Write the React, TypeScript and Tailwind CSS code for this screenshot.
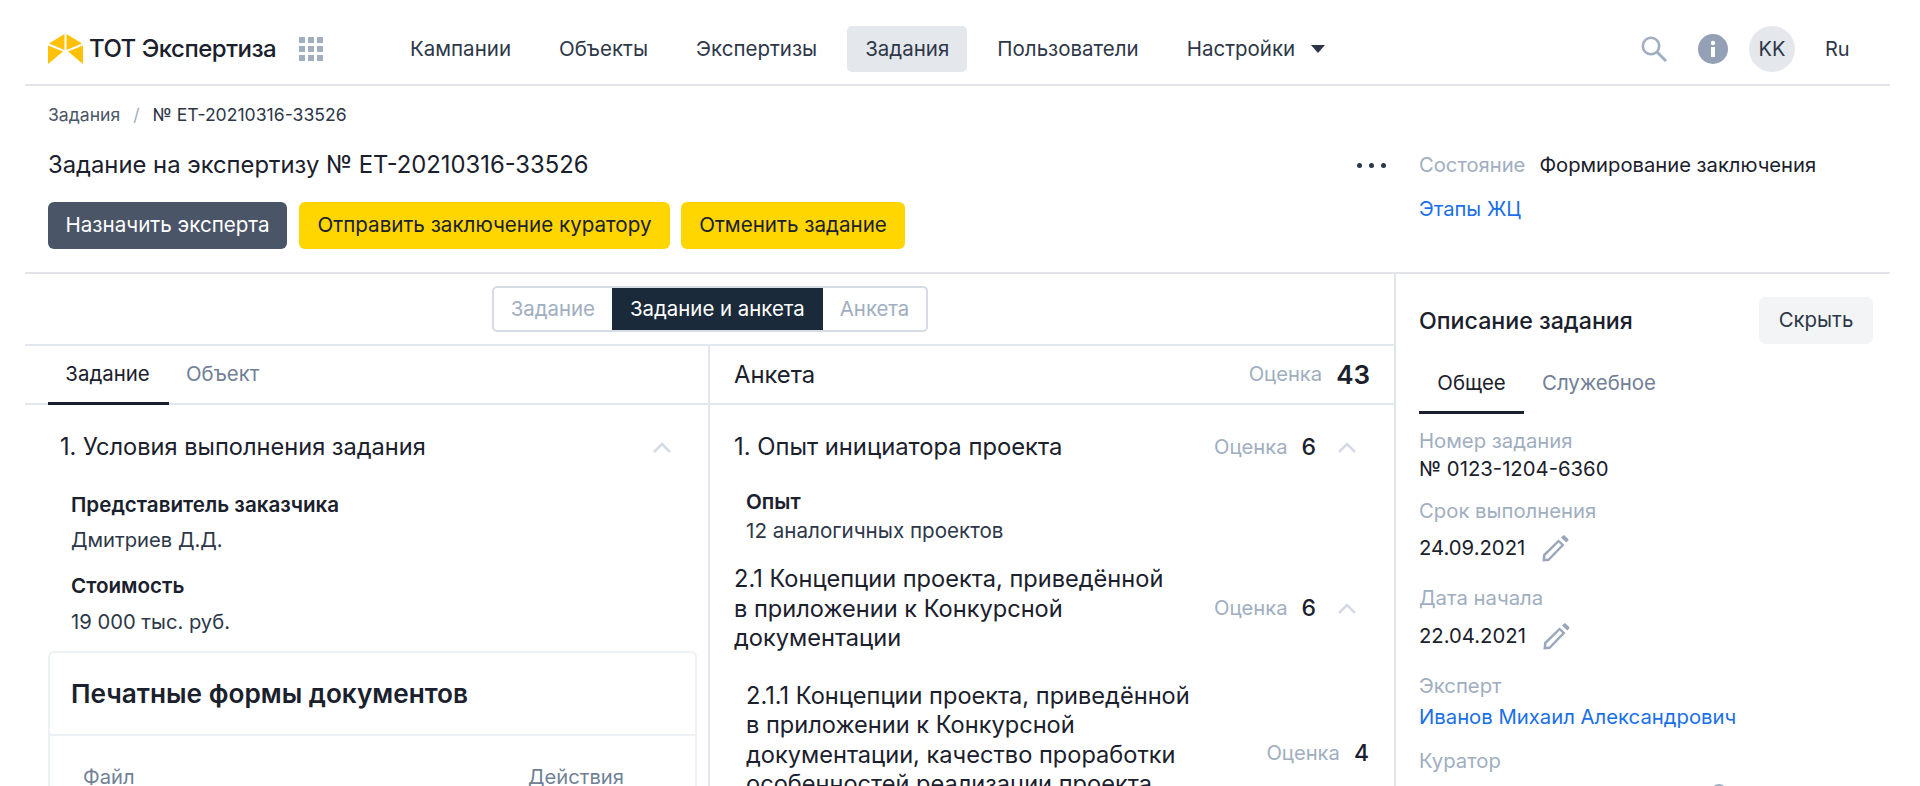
const font = { fontFamily: "Inter, 'Noto Sans', sans-serif" }

function Logo() {
  return (
    <svg width="35" height="30" viewBox="0 0 35 30" className="shrink-0">
      <path d="M0 11.5 L15 17.5 L0 30 Z" fill="#ffc107" />
      <path d="M1 9.5 L16.5 0 L16.5 16 Z" fill="#ffc107" />
      <path d="M18.5 0 L34 9.5 L18.5 16 Z" fill="#ffc107" />
      <path d="M35 11.5 L35 30 L20 17.5 Z" fill="#ffc107" />
    </svg>
  )
}

function AppsGrid() {
  const cells = [0, 1, 2, 3, 4, 5, 6, 7, 8]
  return (
    <div className="grid grid-cols-3 gap-[3px] w-[24px]">
      {cells.map((c) => (
        <div key={c} className="w-[6px] h-[6px] bg-[#a0aec0]" />
      ))}
    </div>
  )
}

function Pencil() {
  return (
    <svg width="27" height="27" viewBox="0 0 27 27" className="shrink-0">
      <path d="M0.5 26.5 L1 19.5 L16.5 4.5 L22.5 10 L7 26 Z M3.6 20.6 L3.2 23.8 L6.2 23.4 L19.2 10 L16.6 7.6 Z" fill="#9aa6ba" fillRule="evenodd" />
      <path d="M19 2.6 L21 .6 Q21.8 0 22.6 .6 L26.2 4 Q26.8 4.8 26.2 5.6 L24.2 7.6 Z" fill="#9aa6ba" />
    </svg>
  )
}

function Chevron() {
  return (
    <svg width="18" height="11" viewBox="0 0 18 11" fill="none" stroke="#d5dbe5" strokeWidth="2.6" className="shrink-0">
      <path d="M1 10 L9 2 L17 10" />
    </svg>
  )
}

function Score({ value }: { value: string }) {
  return (
    <div className="flex items-center gap-[14px] text-[20.2px]">
      <span className="text-[#a0aec0]">Оценка</span>
      <span className="text-[23px] font-medium text-[#1a202c]">{value}</span>
    </div>
  )
}

const navItems = ["Кампании", "Объекты", "Экспертизы", "Задания", "Пользователи", "Настройки"]

export default function App() {
  return (
    <div style={font} className="h-[786px] overflow-hidden bg-white text-[#1a202c] pl-[25px] pr-[30px]">
      {/* top bar */}
      <header className="h-[86px] pt-[14px] border-b-2 border-[#e2e4ea] flex items-center pl-[23px] pr-[40px]">
        <div className="flex items-center gap-[6px] w-[251px]">
          <Logo />
          <span className="text-[24px] font-medium tracking-[-0.5px] whitespace-nowrap">ТОТ Экспертиза</span>
        </div>
        <AppsGrid />
        <nav className="flex items-center gap-[12px] ml-[69px] text-[20.5px] text-[#2d3748]">
          {navItems.map((item) => (
            <div
              key={item}
              className={
                item === "Задания"
                  ? "h-[46px] px-[18px] flex items-center rounded-[5px] bg-[#e4e7ec]"
                  : "h-[46px] px-[18px] flex items-center"
              }
            >
              {item}
              {item === "Настройки" && (
                <svg width="14" height="8" viewBox="0 0 14 8" className="ml-[16px]">
                  <path d="M0 0 H14 L7 8 Z" fill="#2d3748" />
                </svg>
              )}
            </div>
          ))}
        </nav>
        <div className="ml-auto flex items-center">
          <svg width="26" height="26" viewBox="0 0 26 26" fill="none" stroke="#a0aec0" className="shrink-0">
            <circle cx="10" cy="10" r="8.2" strokeWidth="2.6" />
            <path d="M16 16 L25 25" strokeWidth="3" />
          </svg>
          <svg width="30" height="30" viewBox="0 0 30 30" className="ml-[31px] shrink-0">
            <circle cx="15" cy="15" r="15" fill="#94a0b5" />
            <circle cx="15" cy="9" r="2.2" fill="#fff" />
            <rect x="13" y="13" width="4" height="10" fill="#fff" />
          </svg>
          <div className="ml-[21px] w-[46px] h-[46px] rounded-full bg-[#e4e7ec] flex items-center justify-center text-[20px] text-[#2d3748]">
            KK
          </div>
          <span className="ml-[30px] w-[25px] text-[20px] text-[#2d3748] whitespace-nowrap">Ru</span>
        </div>
      </header>

      {/* task head */}
      <section className="h-[188px] border-b-2 border-[#e2e4ea] pl-[23px] flex">
        <div className="flex-1 min-w-0">
          <div className="pt-[19px] h-[59px] flex items-start gap-[13px] text-[17.6px] leading-[20px]">
            <span className="text-[#4a5568]">Задания</span>
            <span className="text-[#a0aec0]">/</span>
            <span className="text-[#2d3748]">№ ET-20210316-33526</span>
          </div>
          <h1 className="h-[57px] text-[23.8px] font-normal leading-[40px]">Задание на экспертизу № ЕТ-20210316-33526</h1>
          <div className="flex text-[20.6px]">
            <button className="w-[239px] h-[47px] rounded-[6px] bg-[#4a5568] text-white whitespace-nowrap">Назначить эксперта</button>
            <button className="ml-[12px] w-[371px] h-[47px] rounded-[6px] bg-[#ffd600] whitespace-nowrap">Отправить заключение куратору</button>
            <button className="ml-[11px] w-[224px] h-[47px] rounded-[6px] bg-[#ffd600] whitespace-nowrap">Отменить задание</button>
          </div>
        </div>
        <div className="w-[29px] h-[40px] mt-[59px] mr-[33px] flex items-center gap-[7px]">
          <div className="w-[5px] h-[5px] rounded-full bg-[#2d3748]" />
          <div className="w-[5px] h-[5px] rounded-full bg-[#2d3748]" />
          <div className="w-[5px] h-[5px] rounded-full bg-[#2d3748]" />
        </div>
        <div className="w-[471px] pt-[59px] text-[20.2px] leading-[40px]">
          <div className="flex gap-[14px] whitespace-nowrap">
            <span className="text-[#a0aec0]">Состояние</span>
            <span>Формирование заключения</span>
          </div>
          <div className="text-[#1a6fe8] leading-[48px]">Этапы ЖЦ</div>
        </div>
      </section>

      <div className="flex h-[512px]">
        {/* main */}
        <div className="w-[1371px] border-r-2 border-[#e2e4ea] flex flex-col">
          <div className="h-[72px] shrink-0 border-b-2 border-[#e2e8f0] flex justify-center items-start pt-[12px] pl-[1px]">
            <div className="flex h-[46px] rounded-[5px] border-2 border-[#d5dce6] text-[20.4px] text-[#a0aec0] overflow-hidden">
              <div className="px-[17px] flex items-center">Задание</div>
              <div className="px-[18px] flex items-center bg-[#1a2a3a] text-white -my-[2px]">Задание и анкета</div>
              <div className="px-[17px] flex items-center">Анкета</div>
            </div>
          </div>

          <div className="flex flex-1 min-h-0">
            {/* task column */}
            <div className="w-[685px] border-r-2 border-[#e2e8f0] overflow-hidden">
              <div className="h-[59px] border-b-2 border-[#e2e8f0] flex pl-[23px] text-[20.4px]">
                <div className="w-[121px] h-[59px] pr-[2px] border-b-[3px] border-[#1a202c] flex items-center justify-center">Задание</div>
                <div className="ml-[17px] h-[57px] flex items-center text-[#718096]">Объект</div>
              </div>
              <div className="pl-[35px] pr-[37px] pt-[25px] h-[54px] flex justify-between items-start">
                <h2 className="text-[23.6px] leading-[34px] font-normal">1. Условия выполнения задания</h2>
                <div className="h-[34px] flex items-center"><Chevron /></div>
              </div>
              <div className="pl-[46px] pt-[28px] text-[20.2px] leading-[36px]">
                <div className="font-semibold text-[20.6px]">Представитель заказчика</div>
                <div className="text-[#2d3748] -mt-[1px]">Дмитриев Д.Д.</div>
                <div className="font-semibold text-[20.6px] mt-[10px]">Стоимость</div>
                <div className="text-[#2d3748]">19 000 тыс. руб.</div>
              </div>
              <div className="ml-[23px] mr-[11px] mt-[11px] border-2 border-[#edf0f4] rounded-[6px] h-[300px]">
                <div className="h-[83px] border-b-2 border-[#edf0f4] pl-[21px] flex items-center text-[26.2px] font-semibold">
                  Печатные формы документов
                </div>
                <div className="flex justify-between pl-[33px] pr-[71px] pt-[29px] text-[20.2px] leading-[24px] text-[#718096]">
                  <span>Файл</span>
                  <span>Действия</span>
                </div>
              </div>
            </div>

            {/* form column */}
            <div className="flex-1 min-w-0 overflow-hidden">
              <div className="h-[59px] border-b-2 border-[#e2e8f0] flex items-center justify-between pl-[24px] pr-[24px]">
                <span className="text-[23.8px]">Анкета</span>
                <div className="flex items-center gap-[14px] text-[20.2px]">
                  <span className="text-[#a0aec0]">Оценка</span>
                  <span className="text-[26px] font-semibold">43</span>
                </div>
              </div>
              <div className="pl-[24px] pr-[38px] pt-[25px] h-[54px] flex justify-between items-start">
                <h2 className="text-[23.8px] leading-[34px] font-normal">1. Опыт инициатора проекта</h2>
                <div className="flex items-center gap-[22px] h-[34px]">
                  <Score value="6" />
                  <Chevron />
                </div>
              </div>
              <div className="pl-[36px] pt-[28px] text-[20.6px] leading-[29px]">
                <div className="font-semibold">Опыт</div>
                <div className="text-[#2d3748]">12 аналогичных проектов</div>
              </div>
              <div className="pl-[24px] pr-[38px] mt-[19px] flex justify-between items-center">
                <h3 className="w-[445px] text-[23.6px] leading-[29.5px] font-normal">
                  2.1 Концепции проекта, приведённой в приложении к Конкурсной документации
                </h3>
                <div className="flex items-center gap-[22px]">
                  <Score value="6" />
                  <Chevron />
                </div>
              </div>
              <div className="pl-[36px] pr-[25px] mt-[28px] h-[146px] flex justify-between items-center">
                <h3 className="w-[455px] self-start text-[23.6px] leading-[29.5px] font-normal">
                  2.1.1 Концепции проекта, приведённой в приложении к Конкурсной документации, качество проработки особенностей реализации проекта
                </h3>
                <Score value="4" />
              </div>
            </div>
          </div>
        </div>

        {/* description */}
        <aside className="flex-1 min-w-0 pl-[23px] pr-[17px] overflow-hidden">
          <div className="pt-[23px] flex justify-between items-center">
            <h2 className="text-[23.2px] font-medium whitespace-nowrap pt-[2px]">Описание задания</h2>
            <button className="w-[114px] h-[47px] rounded-[6px] bg-[#f3f4f6] text-[20.4px] text-[#2d3748]">Скрыть</button>
          </div>
          <div className="flex text-[20.4px] mt-[12px] h-[58px]">
            <div className="w-[105px] h-[58px] border-b-[3px] border-[#1a202c] flex items-center justify-center">Общее</div>
            <div className="ml-[18px] h-[55px] flex items-center text-[#718096]">Служебное</div>
          </div>
          <div className="text-[20.3px] leading-[28px]">
            <div className="mt-[13px] text-[#a0aec0]">Номер задания</div>
            <div>№ 0123-1204-6360</div>
            <div className="mt-[14px] text-[#a0aec0]">Срок выполнения</div>
            <div className="mt-[9px] flex items-center gap-[17px]"><span>24.09.2021</span><Pencil /></div>
            <div className="mt-[22px] text-[#a0aec0]">Дата начала</div>
            <div className="mt-[10px] flex items-center gap-[17px]"><span>22.04.2021</span><Pencil /></div>
            <div className="mt-[22px] text-[#a0aec0]">Эксперт</div>
            <div className="mt-[3px] text-[#1a6fe8] whitespace-nowrap">Иванов Михаил Александрович</div>
            <div className="mt-[16px] text-[#a0aec0]">Куратор</div>
            <div className="mt-[9px] ml-[292px] w-[16px] h-[16px] rounded-full bg-[#a0aec0]" />
          </div>
        </aside>
      </div>
    </div>
  )
}
